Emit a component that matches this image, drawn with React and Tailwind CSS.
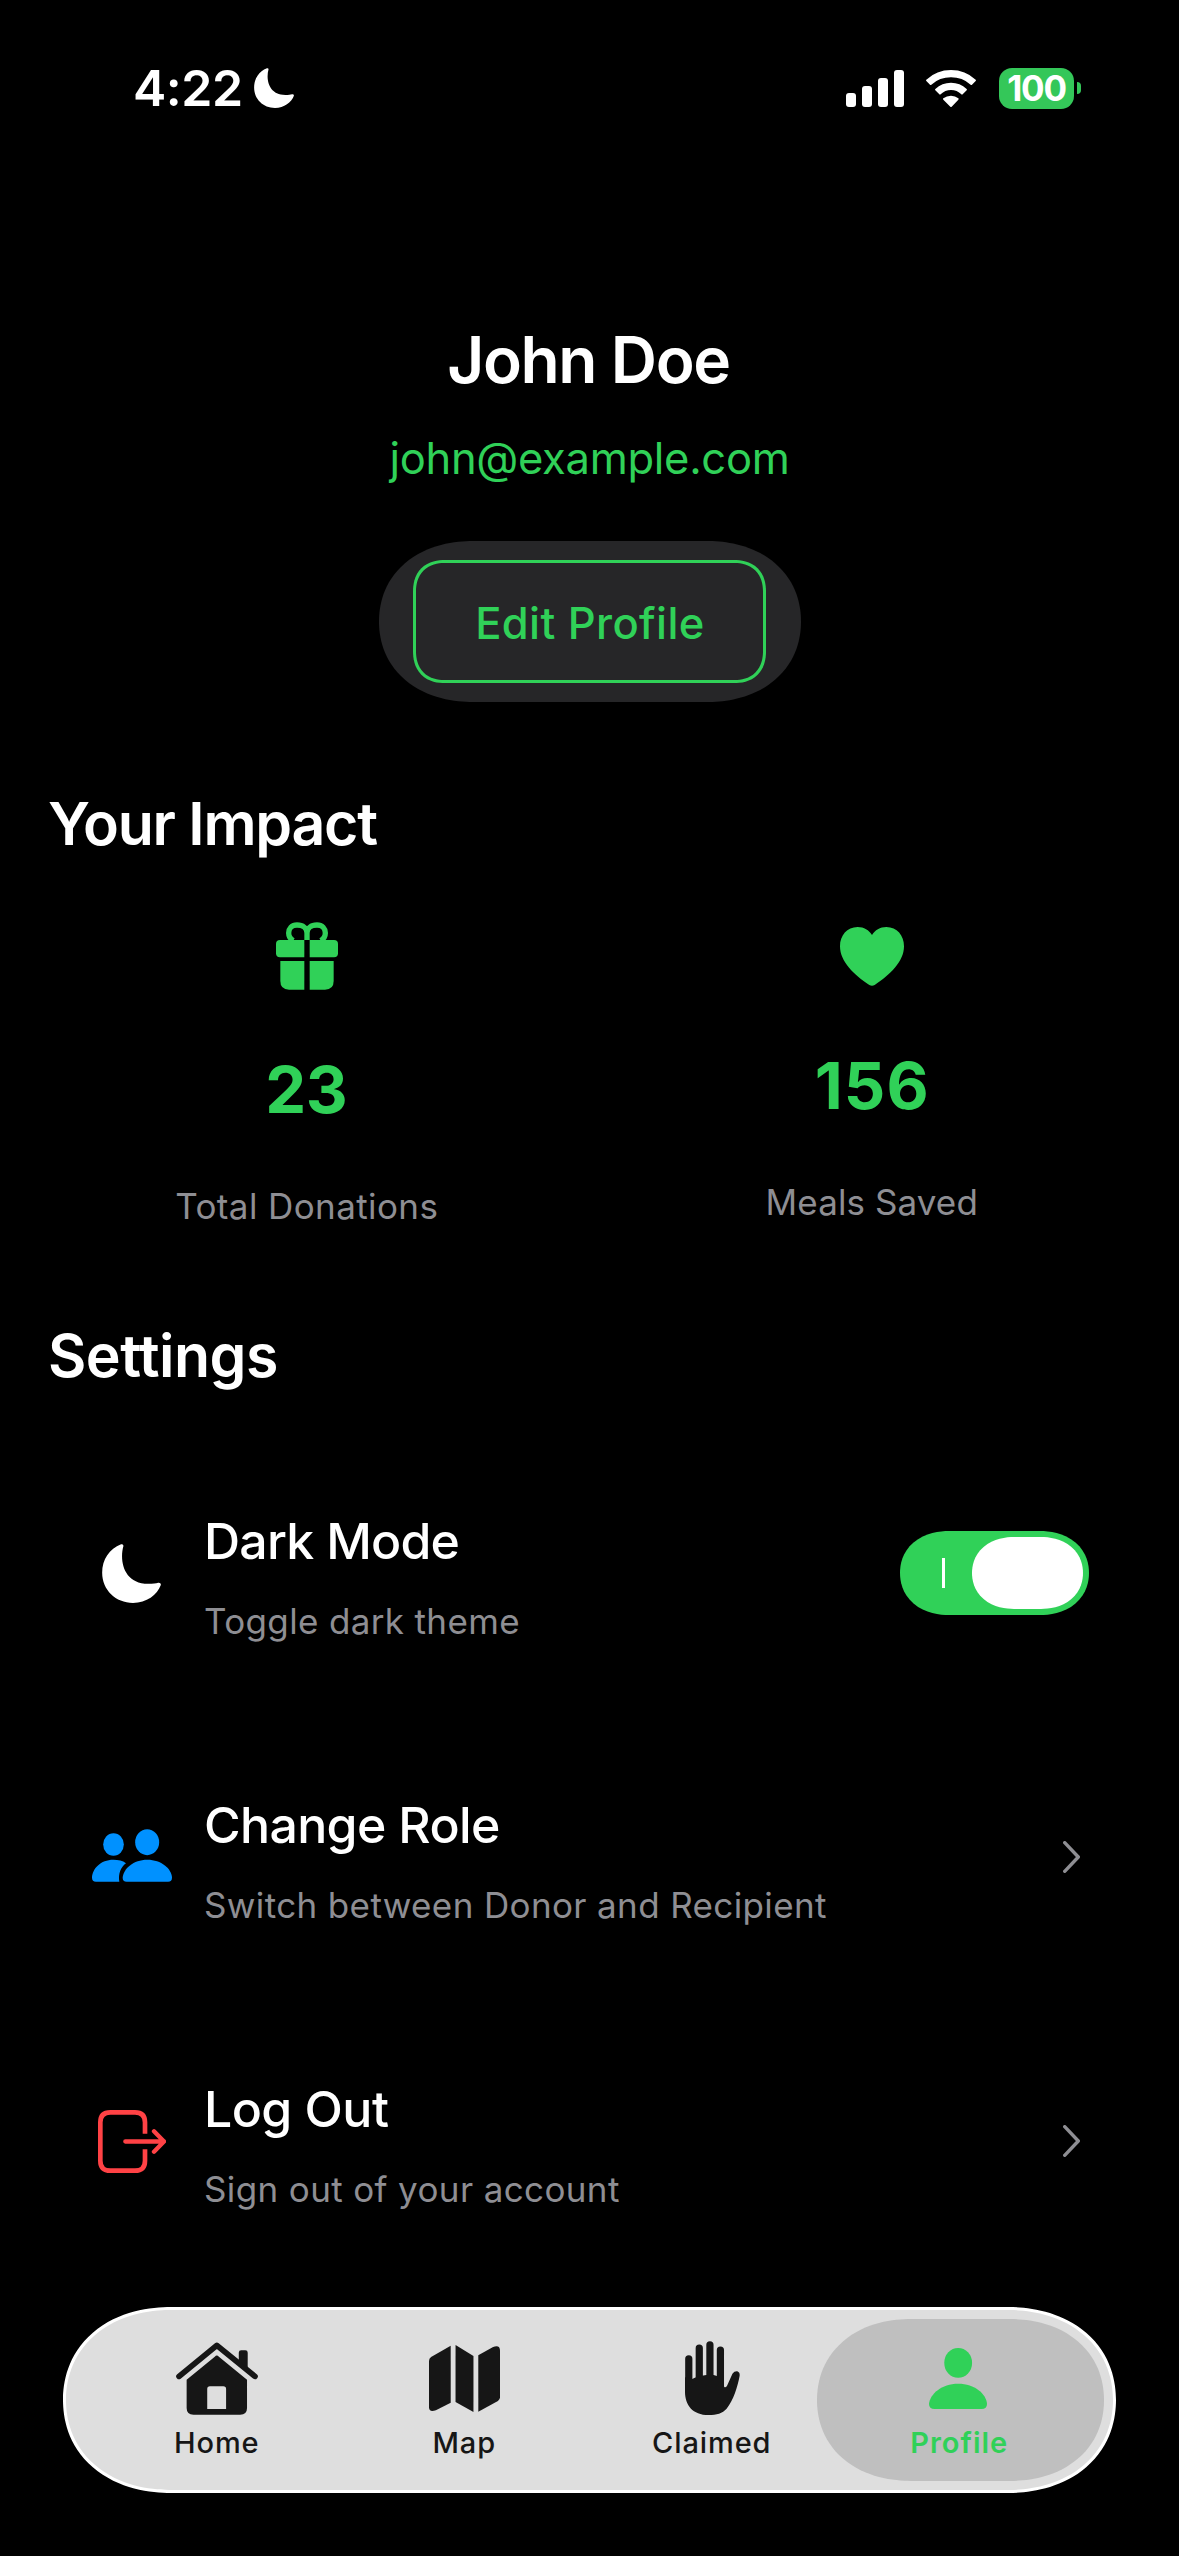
import React from 'react';
import clsx from 'clsx';

function MoonIcon({ className }) {
  return (
    <svg viewBox="96 131 177 178" className={className} fill="currentColor">
      <path d="M153 132Q161 130 160 138C148 180 160 251 235 251C250 251 258 250 265 248Q274 247 273 255C262 285 230 309 189 309C137 309 96 270 96 218C96 178 118 145 153 132Z" />
    </svg>
  );
}

function SignalIcon() {
  return (
    <svg viewBox="0 0 58 37" className="w-[58px] h-[37px]" fill="currentColor">
      <rect x="0" y="23" width="10" height="14" rx="3" />
      <rect x="16" y="16" width="10" height="21" rx="3" />
      <rect x="32" y="8" width="10" height="29" rx="3" />
      <rect x="48" y="0" width="10" height="37" rx="3" />
    </svg>
  );
}

function WifiIcon() {
  return (
    <svg viewBox="320 87 150 111" className="w-[50px] h-[37px]" fill="currentColor">
      <path d="M321 120Q319 118 321 116Q352 87 395 87Q438 87 469 116Q471 118 469 120L458 131Q456 133 454 131Q429 109 395 109Q361 109 336 131Q334 133 332 131Z" />
      <path d="M348 148Q346 146 348 144Q368 125 395 125Q422 125 442 144Q444 146 442 148L430 160Q428 162 426 160Q413 147 395 147Q377 147 364 160Q362 162 360 160Z" />
      <path d="M372 176Q370 174 372 172Q382 164 395 164Q408 164 417 172Q419 174 417 176L397 197Q395 199 393 197Z" />
    </svg>
  );
}

function GiftIcon() {
  return (
    <svg viewBox="108 66 186 204" className="w-[62px] h-[68px]" fill="currentColor">
      <path
        d="M201 120V99C201 85 189 75 171 75C155 75 146 86 146 99C146 110 151 117 160 122M201 99C201 85 213 75 231 75C247 75 256 86 256 99C256 110 251 117 242 122"
        fill="none"
        stroke="currentColor"
        strokeWidth="16"
      />
      <path d="M120 120H193V172H120Q108 172 108 160V132Q108 120 120 120Z" />
      <path d="M209 120H282Q294 120 294 132V160Q294 172 282 172H209Z" />
      <path d="M121 183H193V269H147Q121 269 121 243Z" />
      <path d="M209 183H281V243Q281 269 255 269H209Z" />
    </svg>
  );
}

function HeartIcon() {
  return (
    <svg viewBox="180 81 192 177" className="w-[64px] h-[59px]" fill="currentColor">
      <path d="M276 105C267 90 252 81 233 81C201 81 180 106 180 139C180 185 222 225 268 255Q276 260 284 255C330 225 372 185 372 139C372 106 351 81 319 81C300 81 285 90 276 105Z" />
    </svg>
  );
}

function PeopleIcon() {
  return (
    <svg viewBox="66 117 240 158" className="w-[80px] h-[53px] -mt-[3px] text-[#0091ff]" fill="currentColor">
      <ellipse cx="130.500" cy="163" rx="31" ry="34" />
      <ellipse cx="231.500" cy="156" rx="36" ry="39" />
      <path d="M78 275Q66 275 66 263C67 236 92 209 130 209C145 209 158 212 168 219C152 231 144 250 148 275Z" />
      <path d="M170 275Q158 275 158 263C160 236 190 209 232 209C274 209 305 236 306 263Q306 275 294 275Z" />
    </svg>
  );
}

function LogoutIcon() {
  return (
    <svg viewBox="84 120 204 189" className="w-[68px] h-[63px] text-[#ff4245]" fill="none" stroke="currentColor">
      <path d="M225 191V157Q225 127 195 127H121Q91 127 91 157V272Q91 302 121 302H195Q225 302 225 272V238" strokeWidth="14" />
      <path d="M166 214.500H282M252 184L282 214.500L252 245" strokeWidth="13" strokeLinecap="round" strokeLinejoin="round" />
    </svg>
  );
}

function ChevronIcon() {
  return (
    <svg viewBox="0 0 17 32" className="w-[17px] h-[32px] mr-[9px] text-[#8e8e93]" fill="none" stroke="currentColor">
      <path d="M1.700 1.700L15.300 16L1.700 30.300" strokeWidth="3.400" strokeLinecap="round" strokeLinejoin="round" />
    </svg>
  );
}

function Toggle() {
  return (
    <div className="w-[189px] h-[84px] rounded-[49px/42px] [corner-shape:superellipse(1.1)] bg-[#30d158] flex items-center justify-between pl-[42px] pr-[6px]">
      <span className="w-[3px] h-[30px] bg-white" />
      <span className="w-[111px] h-[72px] rounded-[42px/36px] [corner-shape:superellipse(1.1)] bg-white" />
    </div>
  );
}

function HomeIcon() {
  return (
    <svg viewBox="368 157 239 219" preserveAspectRatio="none" className="w-[82px] h-[73px]" fill="currentColor">
      <path d="M377 260L487 167L598 260" fill="none" stroke="currentColor" strokeWidth="17" strokeLinecap="round" strokeLinejoin="round" />
      <path d="M551 212V189Q551 182 558 182H570Q577 182 577 189V238Z" />
      <path
        fillRule="evenodd"
        d="M481 201Q487 194 493 201L575 270V355Q575 375 555 375H419Q399 375 399 355V270ZM467 290Q459 290 459 298V358H514V298Q514 290 506 290Z"
      />
    </svg>
  );
}

function MapIcon() {
  return (
    <svg viewBox="1103 165 206 201" preserveAspectRatio="none" className="w-[71px] h-[67px]" fill="currentColor">
      <path d="M1166 167V338L1123 361Q1103 368 1103 352V213Q1103 206 1109 201Z" />
      <path d="M1180 165L1232 198V366L1180 336Z" />
      <path d="M1246 196L1289 171Q1309 164 1309 182V322Q1309 329 1303 333L1246 365Z" />
    </svg>
  );
}

function HandIcon() {
  return (
    <svg viewBox="283 153 160 222" preserveAspectRatio="none" className="w-[55px] h-[74px] ml-[2px]" fill="currentColor">
      <path d="M294 206V300M324.500 174V300M355.500 164V300M386 180V300" stroke="currentColor" strokeWidth="21" strokeLinecap="round" />
      <path d="M283 262L304 267Q318 258 345 255H366L376 258L397 290Q400 295 405 288L421 251Q427 243 435 244Q443 247 442 257C436 290 424 330 404 356C392 370 375 375 352 375C305 375 283 345 283 305Z" />
    </svg>
  );
}

function PersonIcon() {
  return (
    <svg viewBox="989 176 167 184" preserveAspectRatio="none" className="w-[58px] h-[61px] mr-[2px]" fill="currentColor">
      <ellipse cx="1073" cy="221" rx="40" ry="45" />
      <path d="M1005 360Q989 360 989 345C992 315 1025 284 1073 284C1121 284 1154 315 1156 345Q1156 360 1140 360Z" />
    </svg>
  );
}

const settings = [
  {
    title: 'Dark Mode',
    subtitle: 'Toggle dark theme',
    icon: <MoonIcon className="w-[59px] h-[59px] mr-[1px]" />,
    action: <Toggle />,
    titleClass: 'tracking-[-0.75px]',
    subtitleClass: 'tracking-[0.35px]',
  },
  {
    title: 'Change Role',
    subtitle: 'Switch between Donor and Recipient',
    icon: <PeopleIcon />,
    action: <ChevronIcon />,
    titleClass: 'tracking-[-0.65px]',
    subtitleClass: 'tracking-[0.37px]',
  },
  {
    title: 'Log Out',
    subtitle: 'Sign out of your account',
    icon: <LogoutIcon />,
    action: <ChevronIcon />,
    titleClass: 'tracking-[-0.55px]',
    subtitleClass: 'tracking-[0.37px]',
  },
];

const tabs = [
  { label: 'Home', icon: <HomeIcon /> },
  { label: 'Map', icon: <MapIcon /> },
  { label: 'Claimed', icon: <HandIcon /> },
  { label: 'Profile', icon: <PersonIcon />, active: true },
];

export default function App() {
  return (
    <div className="w-[1179px] h-[2556px] bg-black text-white flex flex-col overflow-hidden font-['Inter',sans-serif]">
      {/* Status bar */}
      <header className="h-[176px] pl-[133px] pr-[98px] flex items-center justify-between">
        <div className="flex items-center">
          <span className="text-[50px] leading-[60px] font-semibold tracking-[-0.5px]">4:22</span>
          <MoonIcon className="w-[40px] h-[40px] ml-[11px]" />
        </div>
        <div className="flex items-center">
          <SignalIcon />
          <div className="ml-[22px]">
            <WifiIcon />
          </div>
          <div className="ml-[23px] w-[75px] h-[41px] rounded-[13px] bg-[#34c759] flex items-center justify-center">
            <span className="text-[35px] leading-none font-bold tracking-[-1.2px]">100</span>
          </div>
          <span className="ml-[3px] w-[4px] h-[12px] rounded-r-full bg-[#34c759]" />
        </div>
      </header>

      {/* Profile */}
      <section className="mt-[144px] flex flex-col items-center">
        <h1 className="mr-[2px] text-[64px] leading-[80px] font-semibold tracking-[-1.4px]">John Doe</h1>
        <p className="mt-[28px] text-[43.500px] leading-[60px] tracking-[-0.300px] text-[#30d158]">john@example.com</p>
        <button className="mt-[53px] w-[422px] h-[161px] rounded-[94px/80.500px] [corner-shape:superellipse(1.1)] bg-[#262628] flex items-center justify-center">
          <span className="w-[353px] h-[123px] rounded-[32px] [corner-shape:superellipse(1.2)] border-3 border-[#30d158] pt-[2px] pl-[1px] flex items-center justify-center text-[43.500px] leading-[60px] tracking-[0.4px] font-medium text-[#30d158]">
            Edit Profile
          </span>
        </button>
      </section>

      {/* Impact */}
      <h2 className="mt-[87px] ml-[48px] text-[59px] leading-[70px] font-semibold tracking-[-1.25px]">Your Impact</h2>
      <section className="mt-[63px] px-6 grid grid-cols-2 text-[#30d158]">
        <div className="flex flex-col items-center">
          <GiftIcon />
          <span className="mt-[60px] mr-[1px] text-[65px] leading-[80px] font-bold tracking-[-0.5px]">23</span>
          <span className="mt-[51px] text-[35px] leading-[50px] tracking-[0.400px] text-[#8e8e93]">Total Donations</span>
        </div>
        <div className="flex flex-col items-center pt-[5px]">
          <HeartIcon />
          <span className="mt-[60px] text-[65px] leading-[80px] font-bold tracking-[1px]">156</span>
          <span className="mt-[51px] mr-[1px] text-[35px] leading-[50px] tracking-[0.100px] text-[#8e8e93]">Meals Saved</span>
        </div>
      </section>

      {/* Settings */}
      <h2 className="mt-[90px] ml-[48px] text-[59px] leading-[70px] font-semibold tracking-[-0.5px]">Settings</h2>
      <section className="mt-[40px]">
        {settings.map((item) => (
          <div key={item.title} className="h-[284px] pl-[92px] pr-[90px] flex items-center">
            <div className="w-[80px] flex justify-center">{item.icon}</div>
            <div className="ml-[32px] pt-[10px] flex-1 flex flex-col">
              <span className={clsx('text-[50px] leading-[60px] font-medium', item.titleClass)}>{item.title}</span>
              <span className={clsx('mt-[25px] text-[35px] leading-[50px] text-[#8e8e93]', item.subtitleClass)}>{item.subtitle}</span>
            </div>
            {item.action}
          </div>
        ))}
      </section>

      {/* Tab bar */}
      <nav className="mt-[24px] mx-[63px] h-[186px] rounded-[108px/93px] [corner-shape:superellipse(1.1)] border-3 border-white bg-[#dedede] px-[27px] flex">
        {tabs.map((tab) => (
          <div
            key={tab.label}
            className={clsx('relative w-[247.500px] pt-[31px] flex flex-col items-center shrink-0', tab.active ? 'text-[#30d158]' : 'text-[#161616]')}
          >
            {tab.active && (
              <span className="absolute top-[9px] left-[-19px] w-[287px] h-[162px] rounded-[94px/81px] [corner-shape:superellipse(1.1)] bg-[#bfbfbf]" />
            )}
            <div className="relative h-[74px] flex items-center">{tab.icon}</div>
            <span
              className={clsx(
                'relative mt-[8px] text-[29px] leading-[40px]',
                tab.active ? 'font-semibold tracking-[1px]' : 'font-medium tracking-[0.9px]'
              )}
            >
              {tab.label}
            </span>
          </div>
        ))}
      </nav>
    </div>
  );
}
